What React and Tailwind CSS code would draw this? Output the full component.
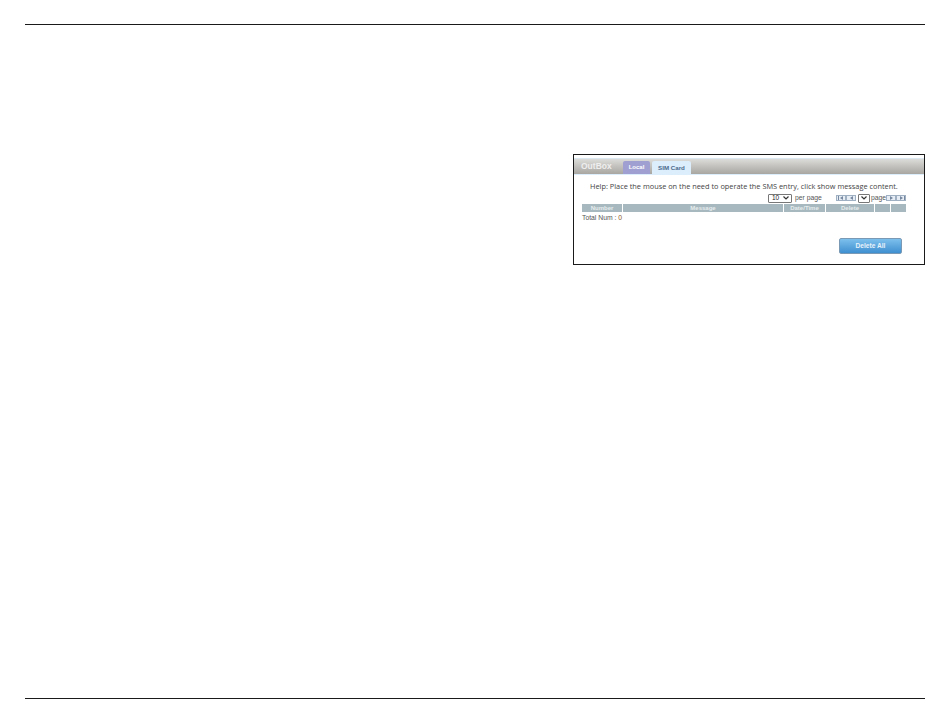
import React from "react";

const cols = [
  { label: "Number", cls: "w-[40px]" },
  { label: "Message", cls: "w-[160px]" },
  { label: "Date/Time", cls: "w-[41px]" },
  { label: "Delete", cls: "w-[48px]" },
  { label: "", cls: "w-[15px]" },
  { label: "", cls: "w-[15px]" },
];

const PagerButton = ({ children }) => (
  <span className="flex h-[6px] w-[10px] items-center justify-center border border-[#9fb0c2] bg-[#e6edf5] text-[#7688a0]">
    {children}
  </span>
);

const Arrow = ({ flip, bar }) => (
  <svg width="7" height="4" viewBox="0 0 7 4" className={flip ? "rotate-180" : ""}>
    {bar && <rect x="0" y="0" width="1" height="4" fill="currentColor" />}
    <path d="M2 2 L5 0 V4 Z" fill="currentColor" />
  </svg>
);

const Chevron = () => (
  <svg width="6" height="4" viewBox="0 0 6 4" className="text-[#333]">
    <path d="M0.5 0.5 L3 3 L5.5 0.5" fill="none" stroke="currentColor" strokeWidth="1.2" />
  </svg>
);

const OutBox = () => (
  <div className="flex h-[111px] w-[352px] flex-col border border-[#1a1a1a] bg-white pt-[3px]">
    <div className="flex h-[16px] items-end border-t border-[#dbe8f2] bg-gradient-to-b from-[#dcdcda] to-[#a9a6a1] pl-[7px]">
      <span className="mb-[1px] w-[42px] text-[8.5px] font-bold leading-[13px] text-[#eeeeee]">OutBox</span>
      <span className="flex h-[13px] w-[27px] items-center justify-center rounded-t-[2px] bg-[#a09fd2] text-[6px] font-bold text-white">
        Local
      </span>
      <span className="ml-[2px] flex h-[13px] w-[39px] items-center justify-center rounded-t-[2px] bg-[#dcedfb] text-[6.2px] font-bold text-[#4a6a8c]">
        SIM Card
      </span>
    </div>
    <div className="h-[1px] bg-[#dcedfb]" />
    <p className="mt-[6px] whitespace-nowrap pl-[16px] font-['Open_Sans',sans-serif] text-[7.36px] leading-[11px] text-[#444444]">
      Help: Place the mouse on the need to operate the SMS entry, click show message content.
    </p>
    <div className="mt-[1px] flex h-[10px] items-center pl-[194px] text-[6.8px] text-[#555555]">
      <span className="flex h-[9px] w-[24px] items-center justify-between rounded-[1px] border border-[#777777] pl-[3px] pr-[2px] text-[6.5px] text-[#222222]">
        10
        <Chevron />
      </span>
      <span className="ml-[3px] w-[41px]">per page</span>
      <PagerButton><Arrow bar /></PagerButton>
      <PagerButton><Arrow /></PagerButton>
      <span className="ml-[2px] flex h-[9px] w-[12px] items-center justify-center rounded-[1px] border border-[#777777]">
        <Chevron />
      </span>
      <span className="ml-[1px] w-[15px]">page</span>
      <PagerButton><Arrow flip /></PagerButton>
      <PagerButton><Arrow flip bar /></PagerButton>
    </div>
    <div className="ml-[8px] mt-[1px] flex h-[8px] gap-[1px]">
      {cols.map((c, i) => (
        <div
          key={i}
          className={`${c.cls} flex items-center justify-center bg-[#a7b9bf] text-[6px] font-bold leading-none text-[#e6eced]`}
        >
          {c.label}
        </div>
      ))}
    </div>
    <div className="ml-[8px] mt-[1px] text-[6.8px] leading-[9px] text-[#555555]">
      Total Num : <span className="text-[#8a5a2a]">0</span>
    </div>
    <div className="mt-[16px] flex justify-end pr-[22px]">
      <span className="flex h-[16px] w-[63px] items-center justify-center rounded-[2px] border border-[#7a99b5] bg-gradient-to-b from-[#7cc0ec] to-[#3e8fd0] text-[6.6px] font-bold text-[#e8f2fa]">
        Delete All
      </span>
    </div>
  </div>
);

export default function App() {
  return (
    <div className="flex h-[725px] w-[950px] flex-col bg-white px-[25px] pt-[24px] font-['Liberation_Sans',Arial,sans-serif]">
      <div className="h-[1px] bg-[#1a1a1a]" />
      <div className="mt-[129px] flex justify-end">
        <OutBox />
      </div>
      <div className="mt-[433px] h-[1px] bg-[#1a1a1a]" />
    </div>
  );
}
